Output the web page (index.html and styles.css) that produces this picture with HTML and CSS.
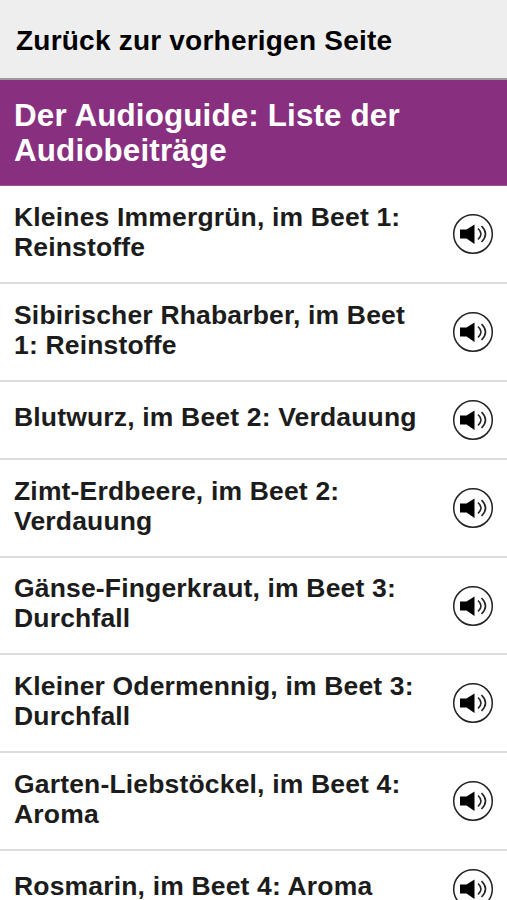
FILE: index.html
```html
<!DOCTYPE html>
<html lang="de">
<head>
<meta charset="utf-8">
<title>Audioguide</title>
<link rel="stylesheet" href="styles.css">
</head>
<body>
<svg class="defs" aria-hidden="true">
  <symbol id="speaker" viewBox="0 0 42 42">
    <circle cx="21" cy="21" r="19.3" fill="#fff" stroke="#222" stroke-width="1.5"/>
    <path d="M8 16.500h6.500L22.500 11.500v19.500l-8-5.500H8z" fill="#000"/>
    <path d="M26 15.500q6 5.500 0 11M29.500 13q8 8 0 16" fill="none" stroke="#222" stroke-width="1.600"/>
  </symbol>
</svg>
<nav class="back"><a>Zurück zur vorherigen Seite</a></nav>
<h1 class="title">Der Audioguide: Liste der<br>Audiobeiträge</h1>
<ul class="list">
  <li class="item"><span>Kleines Immergrün, im Beet 1:<br>Reinstoffe</span><svg class="icon"><use href="#speaker"/></svg></li>
  <li class="item"><span>Sibirischer Rhabarber, im Beet<br>1: Reinstoffe</span><svg class="icon"><use href="#speaker"/></svg></li>
  <li class="item single"><span>Blutwurz, im Beet 2: Verdauung</span><svg class="icon"><use href="#speaker"/></svg></li>
  <li class="item"><span>Zimt-Erdbeere, im Beet 2:<br>Verdauung</span><svg class="icon"><use href="#speaker"/></svg></li>
  <li class="item"><span>Gänse-Fingerkraut, im Beet 3:<br>Durchfall</span><svg class="icon"><use href="#speaker"/></svg></li>
  <li class="item"><span>Kleiner Odermennig, im Beet 3:<br>Durchfall</span><svg class="icon"><use href="#speaker"/></svg></li>
  <li class="item"><span>Garten-Liebstöckel, im Beet 4:<br>Aroma</span><svg class="icon"><use href="#speaker"/></svg></li>
  <li class="item single"><span>Rosmarin, im Beet 4: Aroma</span><svg class="icon"><use href="#speaker"/></svg></li>
</ul>
</body>
</html>
```
FILE: styles.css
```css
* { box-sizing: border-box; }
html, body { height: 100%; }
body {
  margin: 0;
  overflow: hidden;
  background: #fff;
  color: #1c1c1c;
  font-family: "Liberation Sans", Arial, sans-serif;
  font-weight: bold;
}
.defs { position: absolute; width: 0; height: 0; }
.back {
  height: 80px;
  padding: 0 16px;
  border-bottom: 2px solid #999;
  background: #eee;
  color: #000;
  font-size: 28px;
  letter-spacing: 0.22px;
  line-height: 81px;
  white-space: nowrap;
}
.title {
  height: 106.4px;
  margin: 0;
  padding: 18px 14px 0;
  border-bottom: 1px solid #9c5096;
  background: #882f80;
  color: #fff;
  font-size: 31.4px;
  letter-spacing: 0.13px;
  line-height: 35px;
  white-space: nowrap;
}
.list { margin: 0; padding: 0; list-style: none; }
.item {
  display: flex;
  align-items: center;
  justify-content: space-between;
  height: 97.75px;
  padding: 0 13px 0 14px;
  border-bottom: 2px solid #dcdcdc;
  font-size: 26.5px;
  letter-spacing: 0.17px;
  line-height: 30px;
  white-space: nowrap;
}
.item span { margin-top: -4.5px; }
.item.single { height: 78px; }
.item.single span { margin-top: -6px; }
.icon { width: 42px; height: 42px; flex: none; }
```
